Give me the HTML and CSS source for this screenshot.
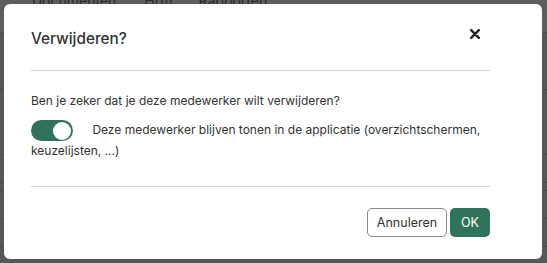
FILE: index.html
```html
<!DOCTYPE html>
<html>
<head>
    <title>Medewerkers</title>
    <link rel="stylesheet" href="styles.css">
</head>
<body>
    <div class="page">
        <div class="nav">
            <span class="nav-item nav-docs">Documenten</span>
            <span class="nav-item nav-hrm">Hrm</span>
            <span class="nav-item">Rapporten</span>
        </div>
        <div class="row row-tall"></div>
        <div class="row row-xtall"></div>
        <div class="row row-mid"></div>
        <div class="row row-thin"></div>
        <div class="row row-mid"></div>
        <div class="row row-mid"></div>
    </div>

    <div class="overlay">
        <div class="modal">
            <div class="modal-header">
                <h2 class="modal-title">Verwijderen?</h2>
                <button class="close-btn" aria-label="Sluiten">
                    <svg width="10" height="10" viewBox="0 0 10 10">
                        <path d="M1.2 1.2 L8.8 8.8 M8.8 1.2 L1.2 8.8" stroke="#222" stroke-width="2.4" stroke-linecap="round"/>
                    </svg>
                </button>
            </div>
            <div class="modal-body">
                <p class="question">Ben je zeker dat je deze medewerker wilt verwijderen?</p>
                <label class="toggle-line">
                    <span class="switch"><span class="knob"></span></span>
                    Deze medewerker blijven tonen in de applicatie (overzichtschermen, keuzelijsten, ...)
                </label>
            </div>
            <div class="modal-footer">
                <button class="btn btn-outline">Annuleren</button>
                <button class="btn btn-primary">OK</button>
            </div>
        </div>
    </div>
</body>
</html>
```

FILE: styles.css
```css
body {
    font-family: Inter, "Noto Sans", sans-serif;
    margin: 0;
    background: #575757;
    color: #333;
    overflow: hidden;
}

.page {
    height: 263px;
}

.nav {
    height: 33px;
    background: #5e5e5e;
    border-bottom: 1px solid #4e4e4e;
    display: flex;
    padding-left: 32px;
    box-sizing: border-box;
}

.nav-item {
    margin-top: -8px;
    font-size: 14px;
    color: #2a2a2a;
}

.nav-docs { margin-right: 28px; }
.nav-hrm { margin-right: 26px; }

.row {
    border-bottom: 1px solid #4a4a4a;
    box-sizing: border-box;
}

.row-tall { height: 57px; }
.row-xtall { height: 65px; }
.row-mid { height: 28px; }
.row-thin { height: 8px; }

.overlay {
    position: fixed;
    inset: 0;
    padding: 4px 5px 4px 4px;
}

.modal {
    width: 538px;
    height: 255px;
    background: #fff;
    border-radius: 6px;
    padding: 0 52px 0 27px;
    box-sizing: border-box;
    display: flex;
    flex-direction: column;
}

.modal-header {
    height: 66px;
    display: flex;
    align-items: center;
    justify-content: space-between;
    border-bottom: 1px solid #d4d4d4;
}

.modal-title {
    margin: 0;
    font-size: 15.3px;
    font-weight: 500;
    color: #333;
    position: relative;
    top: 1px;
}

.close-btn {
    background: none;
    border: none;
    padding: 0;
    margin-right: 10px;
    margin-top: -7px;
    cursor: pointer;
    display: flex;
}

.modal-body {
    padding: 20px 0 25px;
    font-size: 12px;
    line-height: 20px;
}

.question {
    margin: 0 0 9px;
}

.toggle-line {
    display: block;
}

.switch {
    display: inline-block;
    vertical-align: top;
    width: 42px;
    height: 21px;
    border-radius: 11px;
    background: #2f735a;
    position: relative;
    margin-right: 16px;
}

.knob {
    position: absolute;
    right: 2px;
    top: 1.5px;
    width: 18px;
    height: 18px;
    border-radius: 50%;
    background: #fff;
}

.modal-footer {
    border-top: 1px solid #d4d4d4;
    padding-top: 21px;
    display: flex;
    justify-content: flex-end;
    gap: 3px;
}

.btn {
    font-family: inherit;
    font-size: 12.5px;
    height: 29px;
    border-radius: 5px;
    cursor: pointer;
}

.btn-outline {
    width: 80px;
    background: #fff;
    border: 1px solid #8a8a8a;
    color: #333;
}

.btn-primary {
    width: 40px;
    background: #2f735a;
    border: none;
    color: #fff;
}
```
